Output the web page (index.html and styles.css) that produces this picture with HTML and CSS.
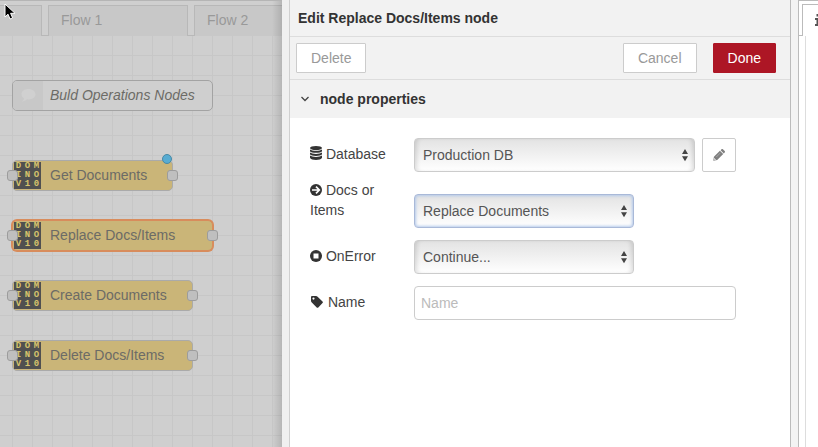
FILE: index.html
```html
<!DOCTYPE html>
<html lang="en">
<head>
<meta charset="utf-8">
<title>Flow editor</title>
<link rel="stylesheet" href="styles.css">
</head>
<body>
<svg class="defs" aria-hidden="true">
  <symbol id="updown" viewBox="0 0 6 13"><path d="M3 0 6 5H0zM0 7.300h6L3 12.300z" fill="#444"/></symbol>
</svg>
<main class="editor">
  <section class="workspace">
    <nav class="tabs">
      <a class="tab tab-first" href="#" aria-label="Previous flow"></a>
      <a class="tab" href="#">Flow 1</a>
      <a class="tab tab-last" href="#">Flow 2</a>
    </nav>
    <div class="canvas">
      <div class="node node-comment">
        <span class="node-icon"><svg width="16" height="14" viewBox="0 0 16 14"><path d="M8.500 0C4.500 0 1.500 2.200 1.500 5.200c0 1.800 1 3.200 2.600 4.200-.3 1.300-1.200 2.300-2.600 3.100 2.300.1 4.200-.8 5.400-2.200.5.100 1 .1 1.600.1 4 0 7-2.300 7-5.200S12.500 0 8.500 0z" fill="#d0d0d0"/></svg></span>
        <span class="node-label">Buld Operations Nodes</span>
      </div>
      <div class="node node-get">
        <span class="domino"><b>D</b><b>O</b><b>M</b><b>I</b><b>N</b><b>O</b><b>V</b><b>1</b><b>0</b></span>
        <span class="node-label">Get Documents</span>
        <i class="port port-in"></i><i class="port port-out"></i><i class="changed"></i>
      </div>
      <div class="node node-replace">
        <span class="domino"><b>D</b><b>O</b><b>M</b><b>I</b><b>N</b><b>O</b><b>V</b><b>1</b><b>0</b></span>
        <span class="node-label">Replace Docs/Items</span>
        <i class="port port-in"></i><i class="port port-out"></i>
      </div>
      <div class="node node-create">
        <span class="domino"><b>D</b><b>O</b><b>M</b><b>I</b><b>N</b><b>O</b><b>V</b><b>1</b><b>0</b></span>
        <span class="node-label">Create Documents</span>
        <i class="port port-in"></i><i class="port port-out"></i>
      </div>
      <div class="node node-delete">
        <span class="domino"><b>D</b><b>O</b><b>M</b><b>I</b><b>N</b><b>O</b><b>V</b><b>1</b><b>0</b></span>
        <span class="node-label">Delete Docs/Items</span>
        <i class="port port-in"></i><i class="port port-out"></i>
      </div>
    </div>
  </section>

  <section class="tray">
    <h1 class="tray-title">Edit Replace Docs/Items node</h1>
    <div class="toolbar">
      <button class="btn btn-delete" type="button">Delete</button>
      <button class="btn" type="button">Cancel</button>
      <button class="btn btn-primary" type="button">Done</button>
    </div>
    <h2 class="section-title">
      <svg width="10" height="10" viewBox="0 0 10 10"><path d="M1.500 3 5 6.500 8.500 3" fill="none" stroke="#444" stroke-width="1.300"/></svg>
      node properties
    </h2>
    <form class="form">
      <div class="row row-tight">
        <label for="database"><svg width="12" height="14" viewBox="0 0 12 14"><g fill="#333"><ellipse cx="6" cy="2" rx="6" ry="2"/><path d="M0 3.400c2 1.900 10 1.900 12 0v1.800c-1 2.200-11 2.200-12 0zM0 6.500c2 1.900 10 1.900 12 0v1.800c-1 2.200-11 2.200-12 0zM0 9.600c2 1.900 10 1.900 12 0v2.200c-1 2.900-11 2.900-12 0z"/></g></svg> Database</label>
        <div class="field">
          <span class="select-wrap"><select id="database"><option>Production DB</option></select><svg class="arrows"><use href="#updown"/></svg></span>
          <button class="btn-edit" type="button" aria-label="Edit database"><svg width="12" height="12" viewBox="0 0 12 12"><path d="M.3 11.700l.6-3.900L6.900 1.800 10.200 5.100 4.200 11.100zM7.600 1.200 8.500.3c.5-.4 1-.4 1.400 0l1.800 1.800c.4.400.4.900 0 1.400l-.9.900z" fill="#808080"/><path d="M1.500 9.200v1.300h1.300" fill="none" stroke="#fff" stroke-width=".7"/><path d="M3.300 8l3.900-3.900" fill="none" stroke="#d0d0d0" stroke-width=".5"/></svg></button>
        </div>
      </div>
      <div class="row">
        <label for="action"><svg width="12" height="12" viewBox="0 0 12 12"><circle cx="6" cy="6" r="6" fill="#333"/><path d="M2 6h7M6 2.700 9.300 6 6 9.300" fill="none" stroke="#fff" stroke-width="1.700"/></svg> Docs or Items</label>
        <div class="field"><span class="select-wrap select-short"><select id="action" class="focused"><option>Replace Documents</option></select><svg class="arrows"><use href="#updown"/></svg></span></div>
      </div>
      <div class="row">
        <label for="onerror"><svg width="12" height="12" viewBox="0 0 12 12"><circle cx="6" cy="6" r="6" fill="#333"/><rect x="3.500" y="3.500" width="5" height="5" fill="#fff"/></svg> OnError</label>
        <div class="field"><span class="select-wrap select-short"><select id="onerror"><option>Continue...</option></select><svg class="arrows"><use href="#updown"/></svg></span></div>
      </div>
      <div class="row">
        <label for="name"><svg width="14" height="12" viewBox="0 0 14 12"><path fill-rule="evenodd" d="M1 1.200C1 .5 1.500 0 2.200 0H6c.6 0 1.200.3 1.600.7l4.900 4.800c.5.500.5 1.100 0 1.600l-4.200 4.300c-.5.500-1.100.5-1.600 0L1.800 6.500C1.300 6 1 5.400 1 4.800zM3.500 1.500a1.100 1.100 0 1 0 0 2.200 1.100 1.100 0 0 0 0-2.200z" fill="#333"/></svg> Name</label>
        <div class="field"><input id="name" type="text" placeholder="Name"></div>
      </div>
    </form>
  </section>

  <div class="separator"></div>

  <aside class="sidebar">
    <div class="sidebar-tabs"><a class="sidebar-tab" href="#" aria-label="Information"><svg width="6" height="12" viewBox="0 0 6 12"><path d="M1.500 0h3v2.500h-3zM0 4h4.500v6H6v2H0v-2h1.500V6H0z" fill="#555"/></svg></a></div>
    <div class="sidebar-body"></div>
  </aside>
</main>
<svg class="cursor" width="13" height="18" viewBox="0 0 13 18" aria-hidden="true"><path d="M1 1v13l3-2.800 2 4.800 2.600-1.100-2-4.600h4.400z" fill="#000" stroke="#fff" stroke-width="1"/></svg>
</body>
</html>
```
FILE: styles.css
```css
* { box-sizing: border-box; }

body {
  margin: 0;
  font: 14px/20px "Liberation Sans", Arial, sans-serif;
  color: #444;
  overflow: hidden;
}

a { color: inherit; text-decoration: none; }

.defs { position: absolute; width: 0; height: 0; }

.editor {
  display: grid;
  grid-template-columns: 282fr 509fr 8px 19fr;
  min-height: 100vh;
}

/* Workspace */
.workspace {
  position: relative;
  display: flex;
  flex-direction: column;
  min-width: 0;
  overflow: hidden;
  background: #cfcfcf;
  border-top: 1px solid #b5b5b5;
}

.workspace::after {
  content: "";
  position: absolute;
  inset: 0 0 0 auto;
  width: 10px;
  background: linear-gradient(to right, transparent, rgba(0, 0, 0, .12));
}

.tabs {
  display: flex;
  gap: 6px;
  height: 35px;
  padding-top: 4px;
  background: linear-gradient(#b8b8b8, #b8b8b8) bottom / 100% 1px no-repeat;
}

.tab {
  flex: 0 0 140px;
  padding: 4px 12px;
  background: #c8c8c8;
  border: 1px solid #b8b8b8;
  border-bottom: 0;
  color: #999;
}

.tab-first { flex-basis: 42px; border-left: 0; }
.tab-last { flex: 1 0 auto; border-right: 0; }

.canvas {
  position: relative;
  flex: 1;
  background-color: #cfcfcf;
  background-image:
    linear-gradient(#c7c7c7 1px, transparent 1px),
    linear-gradient(to right, #c7c7c7 1px, transparent 1px);
  background-size: 20px 20px;
  background-position: 12px 19px;
}

.node {
  position: absolute;
  left: 12px;
  display: flex;
  align-items: center;
  height: 31px;
  background: #cab578;
  border: 1px solid #aaa;
  border-radius: 5px;
  color: #6c6b66;
}

.node-label { padding: 0 0 2px 9px; white-space: nowrap; }

.node-comment { top: 44px; width: 201px; background: #cfcfcf; border-color: #a3a3a3; font-style: italic; }
.node-get { top: 124px; width: 161px; }
.node-replace { top: 184px; width: 201px; border-color: #d88c5c; box-shadow: 0 0 0 1px #d88c5c; }
.node-create { top: 244px; width: 181px; }
.node-delete { top: 304px; width: 181px; }

.node-icon {
  display: grid;
  place-items: center;
  width: 30px;
  height: 100%;
  background: #c8c8c8;
  border-radius: 4px 0 0 4px;
}

.node-comment .node-label { padding-left: 7px; }

.domino {
  display: grid;
  grid-template: repeat(3, 9px) / repeat(3, 9px);
  width: 27px;
  height: 27px;
  margin-left: 1px;
  background: #505050;
  color: #d6c46c;
  font: bold 9px/9px "Liberation Mono", monospace;
  text-align: center;
}

.port {
  position: absolute;
  top: 9px;
  width: 11px;
  height: 11px;
  background: #bfbfbf;
  border: 1px solid #9c9c9c;
  border-radius: 3px;
}

.port-in { left: -6px; }
.port-out { right: -6px; }

.changed {
  position: absolute;
  top: -7px;
  right: 0;
  width: 10px;
  height: 10px;
  background: #58acd2;
  border: 1px solid #4889a5;
  border-radius: 50%;
}

/* Edit tray */
.tray {
  min-width: 0;
  background: #fff;
  border-left: 7px solid #f0f0f0;
  border-right: 1px solid #bbb;
  box-shadow: inset 1px 0 #d0d0d0;
  padding-left: 1px;
}

.tray-title {
  margin: 0;
  padding: 8px 8px;
  background: #f2f2f2;
  border-bottom: 1px solid #ddd;
  font-size: 14px;
  line-height: 20px;
  color: #333;
}

.toolbar {
  display: flex;
  align-items: center;
  gap: 16px;
  padding: 6px 14px 6px 6px;
  background: #f2f2f2;
  border-bottom: 1px solid #ddd;
}

.btn {
  height: 30px;
  padding: 0 14px;
  background: #fff;
  border: 1px solid #ccc;
  border-radius: 1px;
  font: inherit;
  color: #999;
}

.btn-delete { margin-right: auto; }
.btn-primary { background: #ad1625; border-color: #ad1625; color: #fff; }

.section-title {
  display: flex;
  align-items: center;
  gap: 10px;
  margin: 0;
  padding: 9px 10px;
  background: #f2f2f2;
  font-size: 14px;
  line-height: 20px;
  color: #333;
}

.form { padding: 20px 20px 0; }

.row {
  display: flex;
  align-items: flex-end;
  justify-content: space-between;
  margin-bottom: 12px;
  padding-right: 34px;
}

.row-tight { margin-bottom: 8px; }

.row label { width: 84px; padding-bottom: 8px; color: #444; }
.row label svg { vertical-align: -1px; }

.field { display: flex; gap: 7px; width: 322px; }

.select-wrap { position: relative; flex: 1; }
.select-short { flex: 0 0 220px; }

select,
input {
  width: 100%;
  height: 34px;
  border: 1px solid #ccc;
  border-radius: 4px;
  font: inherit;
  color: #555;
}

select {
  display: block;
  appearance: none;
  padding: 0 8px;
  background: linear-gradient(#e3e3e3, #fff);
  box-shadow: inset 4px 0 4px -2px rgba(0, 0, 0, .12), inset -4px 0 4px -2px rgba(0, 0, 0, .12);
}

select.focused {
  border-color: #a9b9d8;
  box-shadow: inset 0 0 3px 1px #b4c9ea;
}

input { padding: 0 6px; background: #fff; }
input::placeholder { color: #bbb; }

.arrows {
  position: absolute;
  top: 11px;
  right: 7px;
  width: 6px;
  height: 13px;
  pointer-events: none;
}

.btn-edit {
  display: grid;
  place-items: center;
  width: 34px;
  height: 34px;
  padding: 0;
  background: #fff;
  border: 1px solid #ccc;
  border-radius: 2px;
}

/* Sidebar */
.separator { background: #f3f3f3; border-right: 1px solid #bbb; }

.sidebar {
  display: flex;
  flex-direction: column;
  min-width: 0;
  overflow: hidden;
  border-top: 1px solid #bbb;
  background: #fff;
}

.sidebar-tabs {
  height: 35px;
  padding: 3px 0 0 3px;
  background: linear-gradient(#bbb, #bbb) bottom left / 4px 1px no-repeat;
}

.sidebar-tab {
  display: block;
  height: 100%;
  padding: 9px 0 0 12px;
  background: #fff;
  border: 1px solid #bbb;
  border-width: 1px 0 0 1px;
}

.sidebar-tab svg { display: block; }
.sidebar-body { flex: 1; margin-left: 6px; border-left: 1px solid #ddd; }

.cursor { position: absolute; top: 3px; left: 4px; }
```
